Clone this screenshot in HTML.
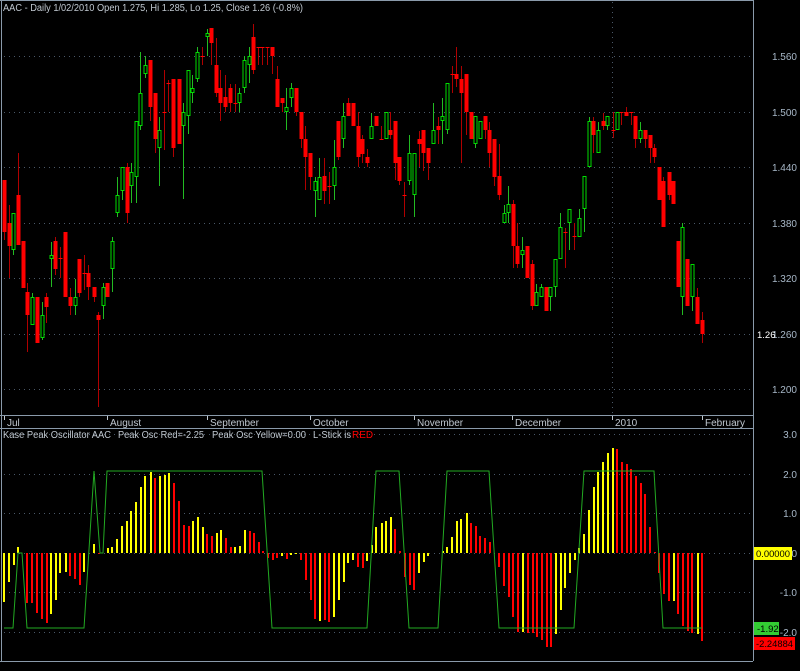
<!DOCTYPE html>
<html><head><meta charset="utf-8"><style>
html,body{margin:0;padding:0;background:#000;width:800px;height:671px;overflow:hidden}
svg{display:block}
text{font-family:"Liberation Sans",sans-serif;font-size:10px}
</style></head><body>
<svg id="s" width="800" height="671" xmlns="http://www.w3.org/2000/svg">
<rect x="0" y="0" width="800" height="671" fill="#000"/>
<g stroke="#4a5868" stroke-width="1" stroke-dasharray="1,4" id="grid"></g>
<g id="c"></g>
<g id="o"></g>
<g stroke="#8a9aaa" stroke-width="1" fill="none">
<line x1="0" y1="0.5" x2="753" y2="0.5"/>
<line x1="1.5" y1="0" x2="1.5" y2="661"/>
<line x1="753.5" y1="0" x2="753.5" y2="661"/>
<line x1="0" y1="415.5" x2="753" y2="415.5"/>
<line x1="0" y1="428.5" x2="753" y2="428.5"/>
<line x1="0" y1="661.5" x2="753" y2="661.5"/>
</g>
<g fill="#a8b8c8" text-anchor="end" style="font-size:9.5px">
<text x="797" y="60">1.560</text><text x="797" y="116">1.500</text>
<text x="797" y="171">1.440</text><text x="797" y="227">1.380</text>
<text x="797" y="282">1.320</text><text x="797" y="338">1.260</text>
<text x="797" y="393">1.200</text>
<text x="797" y="438">3.0</text><text x="797" y="478">2.0</text>
<text x="797" y="517">1.0</text><text x="797" y="557">0</text>
<text x="797" y="596">-1.0</text><text x="797" y="636">-2.0</text>
</g>
<text x="757" y="338" fill="#fff" style="font-size:9.5px">1.26</text>
<rect x="754" y="547" width="38" height="13" fill="#ffff00"/>
<text x="756" y="557" fill="#000" style="font-size:9.5px" textLength="34" lengthAdjust="spacingAndGlyphs">0.00000</text>
<rect x="754" y="622" width="25" height="13" fill="#33cc33"/>
<text x="757" y="632" fill="#000" style="font-size:9.5px">-1.92</text>
<rect x="754" y="637" width="41" height="13" fill="#ff0000"/>
<text x="756" y="647" fill="#000" style="font-size:9.5px" textLength="37" lengthAdjust="spacingAndGlyphs">-2.24884</text>
<text x="3" y="11" fill="#c0c8d0" textLength="300" lengthAdjust="spacingAndGlyphs">AAC - Daily 1/02/2010 Open 1.275, Hi 1.285, Lo 1.25, Close 1.26 (-0.8%)</text>
<g fill="#c0c8d0">
<text x="3" y="438" textLength="108" lengthAdjust="spacingAndGlyphs">Kase Peak Oscillator AAC</text>
<text x="118" y="438" textLength="86" lengthAdjust="spacingAndGlyphs">Peak Osc Red=-2.25</text>
<text x="212" y="438" textLength="94" lengthAdjust="spacingAndGlyphs">Peak Osc Yellow=0.00</text>
<text x="313" y="438" textLength="38" lengthAdjust="spacingAndGlyphs">L-Stick is</text>
<text x="352" y="438" fill="#ff0000">RED</text>
</g>
<g fill="#c0c8d0" id="m" style="font-size:9.5px"></g>
</svg>
<script>
var NS="http://www.w3.org/2000/svg";
function el(p,t,a){var e=document.createElementNS(NS,t);for(var k in a)e.setAttribute(k,a[k]);p.appendChild(e);return e;}
var g=document.getElementById('grid');
[56,112,167,223,278,334,389,434,474,513,553,592,632].forEach(function(y){el(g,'line',{x1:4,y1:y+.5,x2:753,y2:y+.5});});
el(g,'line',{x1:612.5,y1:2,x2:612.5,y2:415,'stroke-dasharray':'1,4'});
var m=document.getElementById('m');
[[4,'Jul'],[107,'August'],[207,'September'],[310,'October'],[414,'November'],[512,'December'],[612,'2010'],[702,'February']].forEach(function(a){
el(m,'line',{x1:a[0]+.5,y1:416,x2:a[0]+.5,y2:420,stroke:'#c0c8d0'});
var t=el(m,'text',{x:a[0]+3,y:426});t.textContent=a[1];});
var C=[[4,180,232,180,240,'r'],[9,223,246,205,278,'r'],[13,213,250,213,255,'g'],[18,195,245,153,245,'r'],[23,241,288,241,288,'r'],[27,292,315,283,352,'r'],[32,297,325,293,325,'g'],[37,297,343,297,343,'r'],[42,315,338,302,340,'g'],[46,297,307,293,323,'r'],[51,255,259,242,287,'g'],[55,241,269,237,275,'r'],[60,258,259,247,278,'r'],[65,232,297,232,297,'r'],[70,297,306,288,315,'r'],[75,297,306,279,315,'g'],[79,259,293,259,297,'r'],[84,273,274,255,290,'r'],[88,273,287,265,300,'r'],[94,287,297,287,302,'r'],[98,315,320,312,407,'r'],[103,287,306,283,319,'g'],[107,283,297,283,297,'r'],[112,241,269,237,292,'g'],[117,195,213,177,217,'g'],[122,167,191,167,200,'g'],[127,167,213,163,223,'r'],[131,172,186,163,203,'g'],[136,121,177,121,203,'g'],[140,93,126,52,130,'g'],[145,65,74,56,78,'g'],[150,60,107,60,121,'r'],[155,93,139,93,153,'r'],[159,130,148,117,186,'g'],[164,112,112,70,150,'r'],[168,83,84,80,112,'r'],[173,79,148,79,157,'r'],[179,79,144,79,144,'r'],[183,112,126,103,199,'g'],[188,70,116,70,134,'g'],[192,88,93,75,103,'g'],[197,52,79,47,82,'g'],
[202,56,57,47,65,'r'],[207,33,37,29,56,'g'],[211,28,43,28,65,'r'],[216,65,93,38,97,'r'],[220,88,103,70,121,'r'],[225,97,107,75,112,'r'],[230,88,103,84,112,'r'],[235,103,103,84,112,'r'],[239,93,103,88,112,'g'],[244,60,88,56,93,'g'],[249,56,65,47,83,'g'],[253,37,70,24,74,'r'],[258,47,47,47,65,'r'],[262,47,47,47,65,'r'],[267,47,47,47,65,'r'],[272,47,56,47,74,'r'],[277,79,107,66,107,'r'],[282,98,103,98,112,'r'],[286,107,112,88,130,'g'],[291,88,98,83,107,'g'],[296,88,112,88,116,'r'],[301,112,139,112,148,'r'],[305,139,157,126,190,'r'],[310,153,177,153,190,'r'],[315,181,191,177,217,'g'],[319,177,200,158,200,'g'],[324,176,191,158,204,'r'],[329,186,186,172,204,'r'],[334,167,186,140,200,'g'],[338,121,157,121,160,'r'],[343,116,139,103,148,'g'],[348,103,116,98,116,'r'],[353,103,126,103,126,'r'],[358,126,157,112,167,'r'],[362,139,154,135,163,'r'],[367,157,163,149,167,'r'],[371,126,139,113,139,'g'],[376,116,126,116,126,'r'],[381,139,139,126,139,'r'],[386,112,139,112,139,'g'],[390,130,135,112,139,'r'],[395,121,163,121,180,'r'],[399,157,181,157,185,'r'],
[404,195,195,182,217,'r'],[409,153,181,135,185,'g'],[414,153,195,153,217,'g'],[419,139,144,131,167,'r'],[423,130,153,130,171,'r'],[428,148,163,148,180,'r'],[433,130,144,103,144,'g'],[438,126,130,117,144,'r'],[442,116,121,98,144,'g'],[447,83,130,83,134,'g'],[452,74,74,66,93,'r'],[456,74,79,47,87,'r'],[461,79,93,66,163,'r'],[466,74,112,74,135,'r'],[471,112,139,112,139,'r'],[475,116,144,116,148,'g'],[480,121,139,121,139,'g'],[485,116,130,116,139,'r'],[489,130,153,122,167,'r'],[494,139,177,139,186,'r'],[499,176,195,144,200,'r'],[504,213,223,205,223,'g'],[508,204,213,186,223,'g'],[513,204,246,200,268,'r'],[517,246,264,223,268,'r'],[522,250,255,237,268,'g'],[527,246,278,246,278,'r'],[532,264,306,260,310,'r'],[536,292,306,284,306,'g'],[541,287,297,284,297,'g'],[546,287,311,287,311,'r'],[550,287,297,287,311,'g'],[555,259,287,259,297,'g'],[560,227,259,213,259,'g'],[565,232,232,228,268,'r'],[569,209,223,209,250,'g'],[574,236,236,223,250,'r'],[579,218,237,209,237,'g'],[584,176,209,176,232,'g'],[589,121,167,117,167,'g'],[593,121,135,117,153,'r'],[598,130,153,122,153,'g'],
[603,121,126,113,130,'r'],[607,116,126,116,130,'g'],[613,130,130,112,138,'r'],[617,112,130,112,130,'g'],[621,112,112,112,125,'r'],[626,112,116,107,116,'r'],[631,112,112,112,125,'r'],[635,116,139,116,148,'r'],[640,130,139,122,143,'g'],[645,130,139,130,148,'r'],[650,135,148,135,163,'r'],[654,148,157,144,163,'r'],[659,167,200,167,200,'r'],[663,181,227,177,227,'r'],[669,172,195,172,200,'r'],[673,181,204,181,204,'r'],[678,241,287,241,287,'r'],[682,227,297,223,315,'g'],[687,259,306,259,306,'r'],[692,264,297,264,311,'g'],[697,297,324,288,324,'r'],[702,320,334,312,343,'r']];
var c=document.getElementById('c');
C.forEach(function(d){var x=d[0],r=d[5]=='r';
el(c,'line',{x1:x+.5,y1:d[3],x2:x+.5,y2:d[4],stroke:r?'#b00000':'#22bb22'});
var h=Math.max(d[2]-d[1],1);
if(r)el(c,'rect',{x:x-1.5,y:d[1],width:4,height:h,fill:'#ff0000'});
else el(c,'rect',{x:x-1,y:d[1]+.5,width:3,height:Math.max(h-1,0.5),fill:'#000',stroke:'#00dd00','stroke-width':1});});
var B=[[4,602,'y'],[9,582,'y'],[14,565,'y'],[18,547,'y'],[27,603,'r'],[32,603,'r'],[37,613,'r'],[42,619,'r'],[47,623,'r'],[51,614,'y'],[56,600,'y'],[60,573,'y'],[66,572,'y'],[70,576,'r'],[75,579,'r'],[80,585,'r'],[84,572,'y'],[94,544,'y'],[99,554,'r'],[108,548,'y'],[112,547,'y'],[117,539,'y'],[122,526,'y'],[127,521,'y'],[131,511,'y'],[136,502,'y'],[141,487,'y'],[145,476,'y'],[151,472,'y'],[155,478,'r'],[160,476,'y'],[165,475,'y'],[169,473,'y'],[174,483,'r'],[179,501,'r'],[184,525,'r'],[189,526,'r'],[193,521,'y'],[198,517,'y'],[203,527,'y'],[207,534,'r'],[212,536,'r'],[217,533,'y'],[221,530,'y'],[226,538,'r'],[231,547,'r'],[235,547,'y'],[240,546,'y'],[245,530,'y'],[250,531,'r'],[254,533,'r'],[259,542,'r'],[263,551,'r'],[268,558,'r'],[273,560,'r'],[277,558,'r'],[282,556,'y'],[287,559,'r'],[291,555,'y'],[296,554,'y'],[301,560,'r'],[306,580,'r'],[311,600,'r'],[315,619,'r'],[320,621,'y'],[325,620,'r'],[329,622,'r'],[334,617,'y'],[339,600,'y'],[344,582,'y'],[348,563,'y'],[353,560,'y'],[358,567,'r'],[363,568,'r'],[367,561,'y'],[372,545,'y'],[376,527,'y'],[382,523,'y'],[386,521,'y'],[391,517,'y'],[395,529,'r'],[400,551,'r'],[405,577,'r'],[410,585,'r'],[414,590,'r'],[419,573,'y'],[424,562,'y'],[428,556,'y'],[443,551,'y'],[447,547,'y'],[452,537,'y'],[457,521,'y'],[461,519,'y'],[467,513,'y'],[471,523,'r'],[476,526,'r'],[480,536,'r'],[485,538,'r'],[490,542,'r'],[499,567,'r'],[504,586,'r'],[509,597,'r'],[513,617,'r'],[518,632,'r'],[523,632,'y'],[528,633,'r'],[533,633,'r'],[537,637,'r'],[542,640,'r'],[547,647,'r'],[551,647,'r'],[556,634,'y'],[561,610,'y'],[565,588,'y'],[570,573,'y'],[575,560,'y'],[579,548,'y'],[584,534,'y'],[589,510,'y'],[594,487,'y'],[598,472,'y'],[603,462,'y'],[608,453,'y'],[613,448,'y'],[617,449,'r'],[622,462,'r'],[627,464,'r'],[631,469,'r'],[636,476,'r'],[641,483,'r'],[645,494,'r'],[650,527,'r'],[655,552,'r'],[659,573,'r'],[664,594,'r'],[669,601,'r'],[674,601,'y'],[678,614,'r'],[683,626,'r'],[688,631,'r'],[692,633,'r'],[698,634,'y'],[702,641,'r']];
var o=document.getElementById('o');
B.forEach(function(b){var y0=Math.min(553,b[1]),h=Math.abs(b[1]-553)||1;
el(o,'rect',{x:b[0]-1,y:y0,width:2,height:h,fill:b[2]=='y'?'#ffff00':'#ff0000'});});
el(o,'polyline',{fill:'none',stroke:'#22aa22','stroke-width':1,points:'4,628 13,628 18,553 22,553 27,628 84,628 94,471 100,553 103,553 107,471 262,471 272,628 367,628 376,471 399,471 409,628 438,628 447,471 489,471 499,628 574,628 584,471 654,471 663,628 702,628'});
</script>
</body></html>
